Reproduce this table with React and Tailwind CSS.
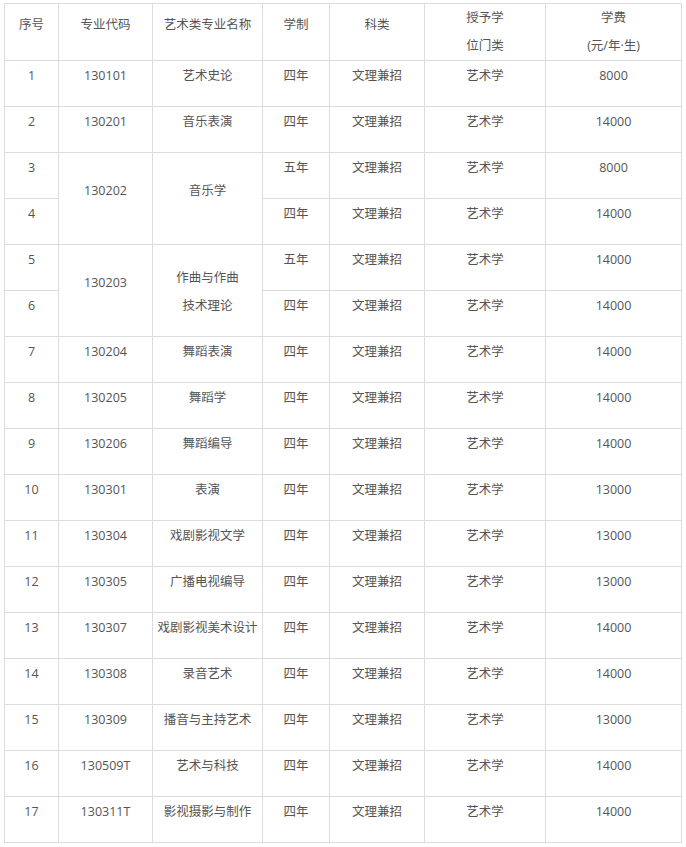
const rows = [
  ['1', '130101', '艺术史论', '四年', '8000'],
  ['2', '130201', '音乐表演', '四年', '14000'],
  ['3', '130202', '音乐学', '五年', '8000', 'span'],
  ['4', null, null, '四年', '14000'],
  ['5', '130203', ['作曲与作曲', '技术理论'], '五年', '14000', 'span'],
  ['6', null, null, '四年', '14000'],
  ['7', '130204', '舞蹈表演', '四年', '14000'],
  ['8', '130205', '舞蹈学', '四年', '14000'],
  ['9', '130206', '舞蹈编导', '四年', '14000'],
  ['10', '130301', '表演', '四年', '13000'],
  ['11', '130304', '戏剧影视文学', '四年', '13000'],
  ['12', '130305', '广播电视编导', '四年', '13000'],
  ['13', '130307', '戏剧影视美术设计', '四年', '14000'],
  ['14', '130308', '录音艺术', '四年', '14000'],
  ['15', '130309', '播音与主持艺术', '四年', '13000'],
  ['16', '130509T', '艺术与科技', '四年', '14000'],
  ['17', '130311T', '影视摄影与制作', '四年', '14000'],
]

const cell = 'border border-[#dcdcdc] text-center align-middle p-0 leading-[28px]'

function Cell({ value, rowSpan, tight }) {
  if (Array.isArray(value)) {
    return (
      <td className={cell} rowSpan={rowSpan}>
        <div className={tight ? '' : 'pt-[2px]'}>
          {value.map(v => <div key={v}>{v}</div>)}
        </div>
      </td>
    )
  }
  return <td className={cell} rowSpan={rowSpan}><div className="pt-[1px] pb-[16px]">{value}</div></td>
}

export default function App() {
  return (
    <div className="bg-white min-h-[847px] pt-[3px] pl-[4px]"
      style={{ fontFamily: '"Open Sans", "Noto Sans CJK SC", sans-serif' }}>
      <table className="table-fixed border-collapse text-[12.5px] text-[#555555] w-[677px]">
        <colgroup>
          <col className="w-[54px]" />
          <col className="w-[94px]" />
          <col className="w-[110px]" />
          <col className="w-[67px]" />
          <col className="w-[95px]" />
          <col className="w-[121px]" />
          <col className="w-[136px]" />
        </colgroup>
        <thead>
          <tr>
            <Cell value="序号" />
            <Cell value="专业代码" />
            <Cell value="艺术类专业名称" />
            <Cell value="学制" />
            <Cell value="科类" />
            <Cell value={['授予学', '位门类']} tight />
            <Cell value={['学费', '(元/年·生)']} tight />
          </tr>
        </thead>
        <tbody>
          {rows.map(r => (
            <tr key={r[0]}>
              <Cell value={r[0]} />
              {r[1] && <Cell value={r[1]} rowSpan={r[5] ? 2 : undefined} />}
              {r[2] && <Cell value={r[2]} rowSpan={r[5] ? 2 : undefined} />}
              <Cell value={r[3]} />
              <Cell value="文理兼招" />
              <Cell value="艺术学" />
              <Cell value={r[4]} />
            </tr>
          ))}
        </tbody>
      </table>
    </div>
  )
}
